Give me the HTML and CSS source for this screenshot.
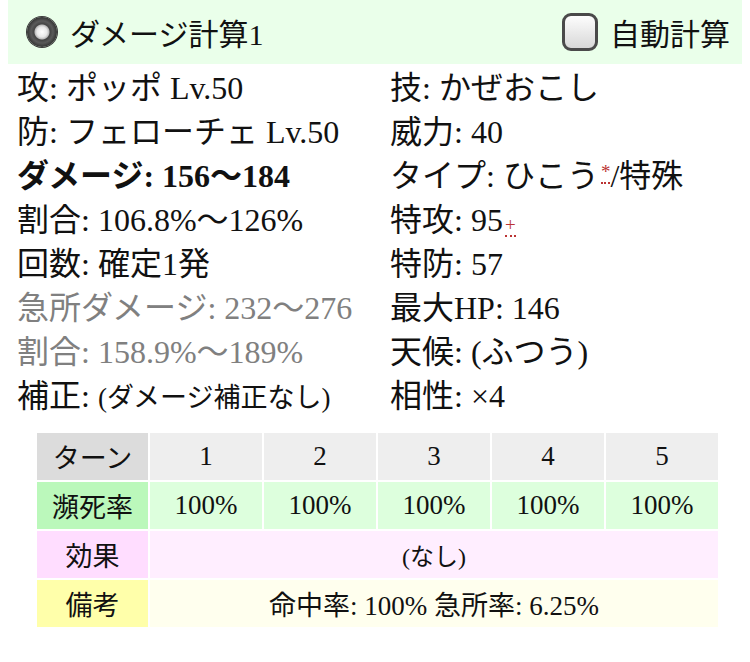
FILE: index.html
```html
<!DOCTYPE html>
<html lang="ja">
<head>
    <meta charset="UTF-8">
    <title>ダメージ計算</title>
    <link rel="stylesheet" href="styles.css">
</head>
<body>
    <div class="bar">
        <label class="opt"><span class="radio"></span>ダメージ計算1</label>
        <label class="opt"><span class="check"></span>自動計算</label>
    </div>
    <div class="info">
        <div>攻: ポッポ Lv.50</div>
        <div>技: かぜおこし</div>
        <div>防: フェローチェ Lv.50</div>
        <div>威力: 40</div>
        <div class="bold">ダメージ: 156～184</div>
        <div>タイプ: ひこう<span class="mark sup">*</span>/特殊</div>
        <div>割合: 106.8%～126%</div>
        <div>特攻: 95<span class="mark">+</span></div>
        <div>回数: 確定1発</div>
        <div>特防: 57</div>
        <div class="gray">急所ダメージ: 232～276</div>
        <div>最大HP: 146</div>
        <div class="gray">割合: 158.9%～189%</div>
        <div>天候: (ふつう)</div>
        <div>補正: <span class="small">(ダメージ補正なし)</span></div>
        <div>相性: ×4</div>
    </div>
    <table class="turns">
        <tr class="head">
            <th>ターン</th><td>1</td><td>2</td><td>3</td><td>4</td><td>5</td>
        </tr>
        <tr class="rate">
            <th>瀕死率</th><td>100%</td><td>100%</td><td>100%</td><td>100%</td><td>100%</td>
        </tr>
        <tr class="effect">
            <th>効果</th><td colspan="5" class="none">(なし)</td>
        </tr>
        <tr class="note">
            <th>備考</th><td colspan="5">命中率: 100% 急所率: 6.25%</td>
        </tr>
    </table>
</body>
</html>
```

FILE: styles.css
```css
body {
    margin: 0 8px;
    font-family: "Liberation Serif", "Noto Sans CJK JP", serif;
    color: #111;
    background: white;
}
.bar {
    height: 64px;
    background-color: #eaffea;
    display: flex;
    align-items: center;
    justify-content: space-between;
    padding: 0 12px 0 19px;
    font-size: 30px;
}
.opt {
    display: flex;
    align-items: center;
}
.radio {
    width: 30px;
    height: 30px;
    border-radius: 50%;
    background: radial-gradient(circle at 50% 50%, #fff 0, #e8e8e8 5px, #bbb 7px, #444 8px, #5a5a5a 11px, #333 15px);
    box-shadow: 0 0 0 1px #3a3a3a;
    margin-right: 13px;
}
.check {
    width: 30px;
    height: 32px;
    border: 3px solid #4a4a4a;
    border-radius: 9px;
    background: linear-gradient(#fdfdfd, #d8d8d8);
    margin-right: 12px;
}
.info {
    display: grid;
    grid-template-columns: 373px 1fr;
    padding-left: 9px;
    margin-top: 2px;
    font-size: 32px;
    line-height: 44px;
}
.bold {
    font-weight: bold;
}
.gray {
    color: #808080;
}
.small {
    font-size: 27px;
}
.mark {
    color: #b33;
    font-size: 19px;
    border-bottom: 2px dotted #b33;
    line-height: 1;
    margin-left: 2px;
}
.sup {
    vertical-align: 9px;
}
.turns {
    margin: 11px 0 0 27px;
    border-spacing: 2px;
    font-size: 27px;
}
.turns th, .turns td {
    height: 47px;
    padding: 0;
    text-align: center;
    font-weight: normal;
    width: 112px;
}
.turns th {
    width: 111px;
}
.turns .none {
    font-size: 24px;
}
.head th { background: #dcdcdc; }
.head td { background: #eeeeee; }
.rate th { background: #bbf8bb; }
.rate td { background: #ddffdd; }
.effect th { background: #ffddff; }
.effect td { background: #ffeeff; }
.note th { background: #ffffaa; }
.note td { background: #ffffee; }
```
